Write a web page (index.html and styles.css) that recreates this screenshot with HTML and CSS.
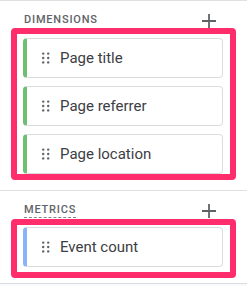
FILE: index.html
```html
<!DOCTYPE html>
<html lang="en">
<head>
    <meta charset="UTF-8">
    <meta name="viewport" content="width=device-width, initial-scale=1.0">
    <title>Dimensions and metrics</title>
    <link rel="stylesheet" href="styles.css">
</head>
<body>
    <div class="panel">
        <section class="section">
            <div class="section-head">
                <span class="section-title">Dimensions</span>
                <svg class="add-icon" width="14" height="14" viewBox="0 0 14 14">
                    <path d="M7 0v14M0 7h14" stroke="#5f6368" stroke-width="1.8" fill="none"/>
                </svg>
            </div>
            <div class="highlight">
                <div class="chip dimension">
                    <svg class="grip" width="8" height="12" viewBox="0 0 8 12">
                        <circle cx="1.2" cy="1.6" r="1.2"/><circle cx="6.2" cy="1.6" r="1.2"/>
                        <circle cx="1.2" cy="6" r="1.2"/><circle cx="6.2" cy="6" r="1.2"/>
                        <circle cx="1.2" cy="10.4" r="1.2"/><circle cx="6.2" cy="10.4" r="1.2"/>
                    </svg>
                    <span>Page title</span>
                </div>
                <div class="chip dimension">
                    <svg class="grip" width="8" height="12" viewBox="0 0 8 12">
                        <circle cx="1.2" cy="1.6" r="1.2"/><circle cx="6.2" cy="1.6" r="1.2"/>
                        <circle cx="1.2" cy="6" r="1.2"/><circle cx="6.2" cy="6" r="1.2"/>
                        <circle cx="1.2" cy="10.4" r="1.2"/><circle cx="6.2" cy="10.4" r="1.2"/>
                    </svg>
                    <span>Page referrer</span>
                </div>
                <div class="chip dimension">
                    <svg class="grip" width="8" height="12" viewBox="0 0 8 12">
                        <circle cx="1.2" cy="1.6" r="1.2"/><circle cx="6.2" cy="1.6" r="1.2"/>
                        <circle cx="1.2" cy="6" r="1.2"/><circle cx="6.2" cy="6" r="1.2"/>
                        <circle cx="1.2" cy="10.4" r="1.2"/><circle cx="6.2" cy="10.4" r="1.2"/>
                    </svg>
                    <span>Page location</span>
                </div>
            </div>
        </section>

        <section class="section metrics">
            <div class="section-head">
                <span class="section-title dashed">Metrics</span>
                <svg class="add-icon" width="14" height="14" viewBox="0 0 14 14">
                    <path d="M7 0v14M0 7h14" stroke="#5f6368" stroke-width="1.8" fill="none"/>
                </svg>
            </div>
            <div class="highlight single">
                <div class="chip metric">
                    <svg class="grip" width="8" height="12" viewBox="0 0 8 12">
                        <circle cx="1.2" cy="1.6" r="1.2"/><circle cx="6.2" cy="1.6" r="1.2"/>
                        <circle cx="1.2" cy="6" r="1.2"/><circle cx="6.2" cy="6" r="1.2"/>
                        <circle cx="1.2" cy="10.4" r="1.2"/><circle cx="6.2" cy="10.4" r="1.2"/>
                    </svg>
                    <span>Event count</span>
                </div>
            </div>
        </section>
    </div>
</body>
</html>
```

FILE: styles.css
```css
body {
    margin: 0;
    background-color: #f8f9fa;
    font-family: Roboto, 'Liberation Sans', sans-serif;
    color: #3c4043;
}

.panel {
    background-color: #fff;
    border-top: 1px solid #e0e0e0;
    border-bottom: 1px solid #dadce0;
    padding-bottom: 5px;
}

.section {
    padding-bottom: 10px;
}

.section.metrics {
    border-top: 1px solid #e0e0e0;
    padding-bottom: 0;
}

.section-head {
    display: flex;
    justify-content: space-between;
    align-items: flex-start;
    padding: 12px 31px 0 24px;
}

.section-title {
    font-size: 11px;
    line-height: 13px;
    font-weight: 500;
    letter-spacing: 0.8px;
    text-transform: uppercase;
    color: #5f6368;
}

.section-title.dashed {
    padding-bottom: 1px;
    border-bottom: 1px dashed #80868b;
    margin-bottom: 1px;
}

.add-icon {
    margin-top: 1px;
}

.highlight {
    margin: 0 11px;
    border: 6px solid #ff2d6c;
    border-radius: 4px;
    padding: 4px 7px 0 6px;
    display: flex;
    flex-direction: column;
    gap: 8px;
}

.highlight.single {
    padding-top: 2px;
    padding-bottom: 5px;
}

.chip {
    display: flex;
    align-items: center;
    gap: 10px;
    height: 40px;
    box-sizing: border-box;
    padding-left: 15px;
    border: 1px solid #dadce0;
    border-left: 4px solid #6fbf73;
    border-radius: 4px;
    font-size: 15px;
    background-color: #fff;
}

.chip.metric {
    border-left-color: #8ab4f8;
}

.grip {
    fill: #5f6368;
}
```
